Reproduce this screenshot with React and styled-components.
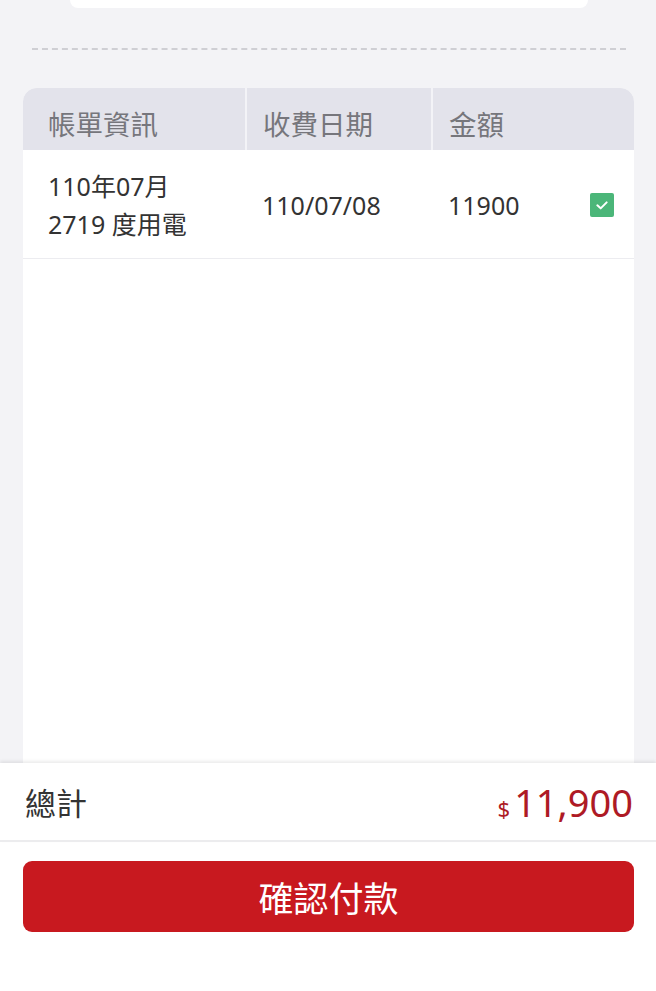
import React from "react";
import styled, { createGlobalStyle } from "styled-components";

const GlobalStyle = createGlobalStyle`
  body {
    margin: 0;
    background: #f3f3f6;
    font-family: "Noto Sans", "Noto Sans CJK TC", sans-serif;
  }
`;

const bills = [
  { month: "110年07月", usage: "2719 度用電", date: "110/07/08", amount: "11900", checked: true },
];

export default function App() {
  return (
    <>
      <GlobalStyle />
      <Page>
        <TopCard />
        <Dashed />
        <Table>
          <HeadRow>
            <HeadCell>帳單資訊</HeadCell>
            <HeadCell divider>收費日期</HeadCell>
            <HeadCell divider>金額</HeadCell>
          </HeadRow>
          {bills.map((b) => (
            <BodyRow key={b.date}>
              <Cell>
                <Lines>
                  <span>{b.month}</span>
                  <span>{b.usage}</span>
                </Lines>
              </Cell>
              <Cell>{b.date}</Cell>
              <Cell>
                {b.amount}
                <Check checked={b.checked}>
                  <svg width="16" height="16" viewBox="0 0 24 24" fill="none" stroke="#fff" strokeWidth="3" strokeLinecap="round" strokeLinejoin="round">
                    <polyline points="5 12.5 10 17 19 8" />
                  </svg>
                </Check>
              </Cell>
            </BodyRow>
          ))}
        </Table>
        <TotalBar>
          <TotalLabel>總計</TotalLabel>
          <TotalValue>
            <small>$</small>11,900
          </TotalValue>
        </TotalBar>
        <ButtonArea>
          <PayButton>確認付款</PayButton>
        </ButtonArea>
      </Page>
    </>
  );
}

const Page = styled.div`
  height: 991px;
  display: flex;
  flex-direction: column;
  overflow: hidden;
`;

const TopCard = styled.div`
  height: 8px;
  margin: 0 68px 0 70px;
  background: #fff;
  border-radius: 0 0 14px 14px;
`;

const Dashed = styled.div`
  margin: 40px 30px 0 32px;
  border-top: 2px dashed #cfcfd4;
`;

const Table = styled.div`
  flex: 1;
  margin: 38px 22px 0 23px;
  background: #fff;
  border-radius: 14px 14px 0 0;
  overflow: hidden;
`;

const HeadRow = styled.div`
  display: grid;
  grid-template-columns: 222px 186px 1fr;
  height: 62px;
  background: #e3e3eb;
`;

const HeadCell = styled.div`
  display: flex;
  align-items: center;
  padding-top: 8px;
  padding-left: ${(p) => (p.divider ? 16 : 25)}px;
  border-left: ${(p) => (p.divider ? "2px solid #f3f3f7" : "none")};
  font-family: "Noto Sans CJK TC", sans-serif;
  font-size: 27.5px;
  color: #76767c;
`;

const BodyRow = styled.div`
  display: grid;
  grid-template-columns: 222px 186px 1fr;
  height: 108px;
  border-bottom: 1px solid #ececf0;
`;

const Cell = styled.div`
  display: flex;
  align-items: center;
  padding: 2px 20px 0 17px;
  font-size: 25px;
  color: #333;
  &:first-child {
    padding-left: 25px;
  }
`;

const Lines = styled.div`
  display: flex;
  flex-direction: column;
  gap: 6px;
  line-height: 32px;
`;

const Check = styled.span`
  margin-left: auto;
  width: 24px;
  height: 24px;
  border-radius: 2px;
  background: ${(p) => (p.checked ? "#4bb679" : "#fff")};
  display: flex;
  align-items: center;
  justify-content: center;
`;

const TotalBar = styled.div`
  height: 77px;
  display: flex;
  align-items: center;
  justify-content: space-between;
  padding: 0 23px 0 25px;
  background: #fff;
  box-shadow: 0 -2px 3px rgba(0, 0, 0, 0.08);
  border-bottom: 2px solid #ececee;
  position: relative;
`;

const TotalLabel = styled.div`
  font-family: "Noto Sans CJK TC", sans-serif;
  font-size: 31px;
  color: #333;
`;

const TotalValue = styled.div`
  font-size: 38px;
  color: #ae1a25;
  small {
    font-size: 22px;
    margin-right: 4px;
  }
`;

const ButtonArea = styled.div`
  flex: 0 0 149px;
  background: #fff;
  padding: 19px 22px 0 23px;
  box-sizing: border-box;
`;

const PayButton = styled.button`
  width: 100%;
  height: 71px;
  border: none;
  border-radius: 9px;
  background: #c8191f;
  color: #fff;
  font-family: "Noto Sans CJK TC", sans-serif;
  font-size: 35px;
`;
